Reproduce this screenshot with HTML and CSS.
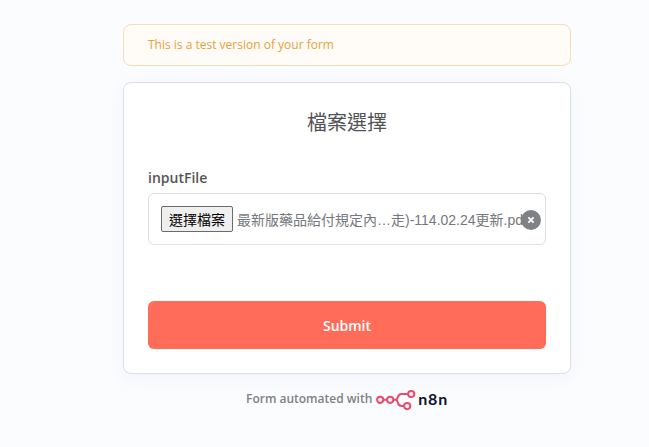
FILE: index.html
```html
<!DOCTYPE html>
<html lang="zh-Hant">
<head>
<meta charset="utf-8">
<title>檔案選擇</title>
<link rel="stylesheet" href="styles.css">
</head>
<body>
<main class="container">
  <div class="test-notice">This is a test version of your form</div>
  <form class="card">
    <h1 class="title">檔案選擇</h1>
    <div class="field">
      <label class="label">inputFile</label>
      <div class="file-input">
        <button type="button" class="choose">選擇檔案</button>
        <span class="file-name">最新版藥品給付規定內…走)-114.02.24更新.pdf</span>
        <button type="button" class="clear" aria-label="Clear">
          <svg width="20" height="20" viewBox="0 0 20 20"><path d="M7.4 7.4 12.6 12.6M12.6 7.4 7.4 12.6" stroke="#fff" stroke-width="1.9"/></svg>
        </button>
      </div>
    </div>
    <button type="button" class="submit">Submit</button>
  </form>
  <footer class="footer">
    <span class="footer-text">Form automated with</span>
    <svg class="logo" width="40" height="22" viewBox="0 0 40 22" fill="none" stroke="#ea4b71" stroke-width="2">
      <circle cx="4.2" cy="10.8" r="3.1"/>
      <circle cx="14.2" cy="10.8" r="3.1"/>
      <circle cx="35.2" cy="5" r="3.1"/>
      <circle cx="31.2" cy="17.1" r="3.1"/>
      <path d="M7.3 10.8H11.1M17.3 10.8H19.5C22.9 10.8 20.6 5 25.4 5H32.1M19.5 10.8C22.9 10.8 20.6 17.1 25.4 17.1H28.1"/>
    </svg>
    <span class="wordmark">n8n</span>
  </footer>
</main>
</body>
</html>
```
FILE: styles.css
```css
* {
  box-sizing: border-box;
}

body {
  margin: 0;
  height: 447px;
  overflow: hidden;
  background: #fbfcfe;
  font-family: "Open Sans", "Noto Sans CJK TC", sans-serif;
}

.container {
  width: 448px;
  margin-left: 123px;
  padding-top: 24px;
  display: flex;
  flex-direction: column;
}

.test-notice {
  height: 42px;
  margin-bottom: 16px;
  padding: 0 24px;
  border: 1px solid #f6dcb7;
  border-radius: 8px;
  background: #fffbf6;
  color: #e6a23d;
  font-size: 12px;
  line-height: 40px;
}

.card {
  height: 292px;
  padding: 24px;
  display: flex;
  flex-direction: column;
  border: 1px solid #dbdfe7;
  border-radius: 8px;
  background: #fff;
  box-shadow: 0 4px 16px rgba(99, 77, 255, 0.06);
}

.title {
  margin: 0 0 32px;
  height: 30px;
  font-size: 20px;
  font-weight: 400;
  line-height: 32px;
  text-align: center;
  color: #525356;
}

.label {
  display: block;
  height: 24px;
  font-size: 14px;
  font-weight: 600;
  line-height: 18px;
  color: #555;
}

.field {
  margin-bottom: 56px;
}

.file-input {
  position: relative;
  display: flex;
  align-items: center;
  gap: 4px;
  height: 52px;
  padding: 0 12px;
  border: 1px solid #dbdfe7;
  border-radius: 6px;
  color: #75787d;
  font: 14px "Liberation Sans", "Noto Sans CJK TC", sans-serif;
}

.choose {
  flex: none;
  width: 72px;
  height: 26px;
  padding: 0;
  border: 1px solid #6b6b6b;
  border-radius: 2px;
  background: #efefef;
  color: #000;
  font: inherit;
}

.file-name {
  white-space: nowrap;
}

.clear {
  position: absolute;
  top: 16px;
  right: 4px;
  width: 20px;
  height: 20px;
  padding: 0;
  border: 0;
  border-radius: 50%;
  background: #7e8186;
}

.clear svg {
  display: block;
}

.submit {
  flex: none;
  height: 48px;
  border: 0;
  border-radius: 6px;
  background: #ff6d5a;
  color: #fff;
  font: 600 14px "Open Sans", sans-serif;
}

.footer {
  display: flex;
  align-items: center;
  height: 22px;
  margin-top: 15px;
  padding-left: 123px;
}

.footer-text {
  padding-bottom: 3px;
  font-size: 12px;
  font-weight: 600;
  color: #7e8186;
  white-space: nowrap;
}

.logo {
  flex: none;
  margin-left: 4px;
}

.wordmark {
  margin-left: 2px;
  padding-bottom: 3px;
  font: 700 16px/20px Lato, sans-serif;
  letter-spacing: 0.8px;
  color: #101330;
}
```
